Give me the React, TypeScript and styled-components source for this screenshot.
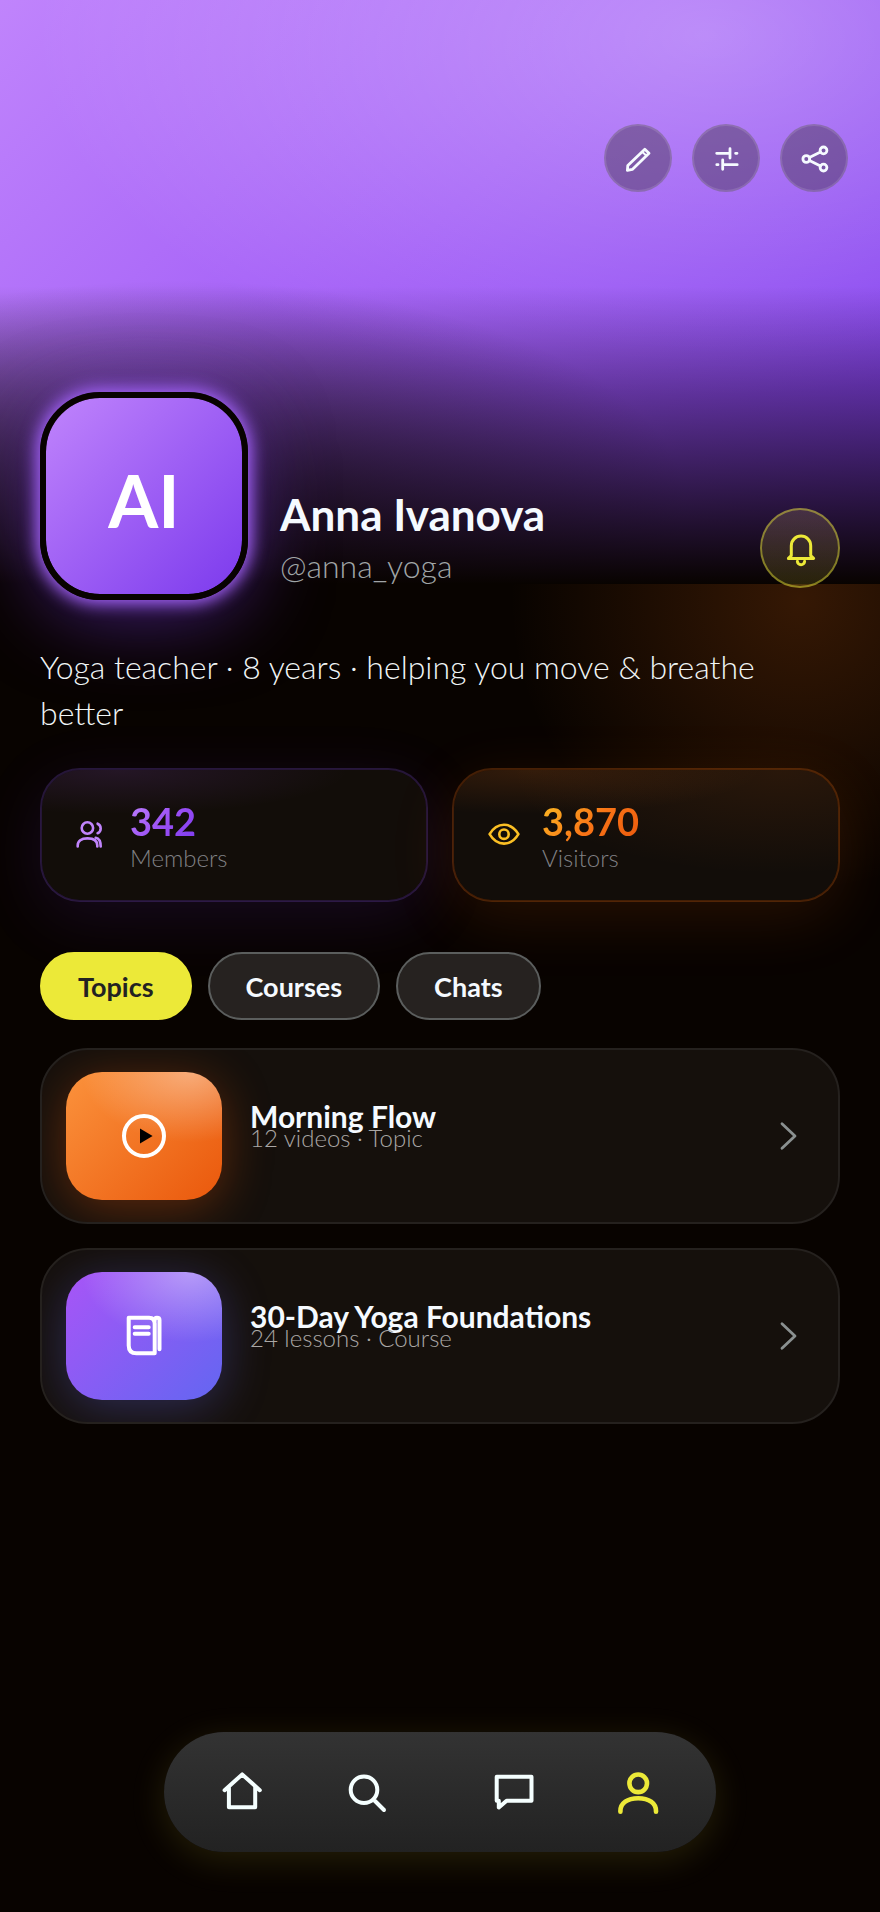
import React, { useState } from 'react';
import styled, { createGlobalStyle, css } from 'styled-components';

const GlobalStyle = createGlobalStyle`
  *, *::before, *::after { box-sizing: border-box; }
  body {
    margin: 0;
    background: #080300;
    font-family: Lato, "Liberation Sans", sans-serif;
    color: #f5faff;
  }
  button { font: inherit; color: inherit; border: 0; padding: 0; cursor: pointer; }
  h1, h2, p { margin: 0; }
`;

const Page = styled.div`
  min-height: 100vh;
  display: flex;
  flex-direction: column;
  padding-bottom: 60px;
  background: radial-gradient(circle 290px at calc(100% - 80px) 600px, rgba(249, 115, 22, 0.19), transparent) no-repeat;
`;

const Hero = styled.header`
  height: 584px;
  padding: 124px 32px 0;
  display: flex;
  justify-content: flex-end;
  align-items: flex-start;
  gap: 20px;
  background:
    linear-gradient(180deg, rgba(8, 3, 0, 0) 49%, #080300 100%),
    radial-gradient(ellipse 76% 62% at 80% 6%, rgba(255, 255, 255, 0.3), transparent),
    radial-gradient(ellipse 58% 38% at 20% 86%, rgba(8, 3, 0, 0.6), transparent),
    linear-gradient(135deg, #c084fc 0%, #a35ff7 45%, #7c3aed 100%);
`;

const RoundButton = styled.button`
  width: 68px;
  height: 68px;
  border-radius: 50%;
  border: 2px solid rgba(255, 255, 255, 0.12);
  background: rgba(58, 48, 60, 0.42);
  display: grid;
  place-items: center;
  color: #f5faff;
`;

const BellButton = styled(RoundButton)`
  width: 80px;
  height: 80px;
  margin-bottom: 12px;
  border-color: rgba(236, 233, 56, 0.45);
  background: linear-gradient(180deg, rgba(236, 200, 120, 0.17), rgba(200, 190, 56, 0.17)) border-box;
  color: #ece938;
`;

const Profile = styled.section`
  margin-top: -192px;
  padding: 0 40px;
  display: flex;
  align-items: flex-end;
`;

const Avatar = styled.div`
  flex: none;
  width: 208px;
  height: 208px;
  padding-top: 8px;
  border: 6px solid #080300;
  border-radius: 60px;
  display: grid;
  place-items: center;
  font-size: 72px;
  font-weight: 700;
  color: #fff;
  background: linear-gradient(135deg, #c084fc, #7c3aed) padding-box;
  box-shadow: 0 0 16px 4px #a362f7, 0 16px 80px rgba(124, 58, 237, 0.5);
`;

const Identity = styled.div`
  flex: 1;
  min-width: 0;
  padding: 0 32px 12px;
`;

const Name = styled.h1`
  font-size: 44px;
  line-height: 60px;
  font-weight: 700;
`;

const Handle = styled.p`
  font-size: 32px;
  line-height: 44px;
  font-weight: 300;
  color: #a0a5a7;
`;

const Content = styled.main`
  padding: 0 40px;
`;

const Bio = styled.p`
  margin-top: 44px;
  font-size: 32px;
  line-height: 46px;
  font-weight: 300;
  color: #f0f5f6;
`;

const Stats = styled.section`
  margin-top: 32px;
  display: grid;
  grid-template-columns: 1fr 1fr;
  gap: 24px;
`;

type Tone = 'violet' | 'orange';

const statTone = {
  violet: css`
    color: #c084fc;
    border-color: rgba(139, 92, 246, 0.22);
    background:
      radial-gradient(ellipse 60% 34% at 20% 0%, rgba(168, 85, 247, 0.12), transparent),
      #120d09;
    background-clip: padding-box;
    box-shadow: 0 16px 64px rgba(124, 58, 237, 0.13);
  `,
  orange: css`
    color: #fbbf24;
    border-color: rgba(249, 115, 22, 0.24);
    background:
      radial-gradient(ellipse 60% 34% at 20% 0%, rgba(249, 115, 22, 0.14), transparent),
      radial-gradient(ellipse 70% 80% at 85% 0%, rgba(249, 115, 22, 0.1), transparent),
      #120d09;
    background-clip: padding-box;
    box-shadow: 0 16px 64px rgba(249, 115, 22, 0.13);
  `,
};

const StatCard = styled.div<{ $tone: Tone }>`
  display: flex;
  align-items: center;
  gap: 18px;
  padding: 28px 30px;
  border: 2px solid;
  border-radius: 40px;
  ${p => statTone[p.$tone]}
`;

const StatValue = styled.p<{ $tone: Tone }>`
  width: fit-content;
  font-size: 38px;
  line-height: 46px;
  font-weight: 700;
  color: transparent;
  background: ${p => p.$tone === 'violet'
    ? 'linear-gradient(135deg, #c084fc, #9a4ff5 55%, #7c3aed)'
    : 'linear-gradient(135deg, #fbbf24, #f97316 55%, #ea580c)'};
  background-clip: text;
  -webkit-background-clip: text;
`;

const StatLabel = styled.p`
  font-size: 24px;
  line-height: 28px;
  font-weight: 300;
  color: #808084;
`;

const Tabs = styled.nav`
  margin-top: 50px;
  display: flex;
  flex-wrap: wrap;
  gap: 16px;
`;

const Tab = styled.button<{ $active: boolean }>`
  && {
    height: 68px;
    padding: 0 36px;
    border: 2px solid ${p => (p.$active ? '#ece938' : '#5b5e5d')};
    border-radius: 34px;
    background: ${p => (p.$active ? '#ece938' : '#262220')};
    color: ${p => (p.$active ? '#222' : '#f5faff')};
    font-size: 27px;
    font-weight: 700;
  }
`;

const List = styled.div`
  margin-top: 28px;
  display: grid;
  gap: 24px;
`;

const Item = styled.a`
  display: flex;
  align-items: center;
  padding: 22px;
  padding-left: 24px;
  border: 2px solid #25211e;
  border-radius: 48px;
  background: #15100c;
  color: inherit;
  text-decoration: none;
  overflow: hidden;
`;

const Thumb = styled.div<{ $tone: Tone }>`
  flex: none;
  width: 156px;
  height: 128px;
  border-radius: 36px;
  display: grid;
  place-items: center;
  color: #fff;
  background:
    radial-gradient(ellipse 70% 55% at 80% 0%, rgba(255, 255, 255, 0.38), transparent),
    ${p => p.$tone === 'orange'
      ? 'linear-gradient(135deg, #fb923c, #ea580c)'
      : 'linear-gradient(135deg, #a855f7, #6366f1)'};
  box-shadow: 0 8px 48px ${p => (p.$tone === 'orange' ? 'rgba(234, 88, 12, 0.35)' : 'rgba(99, 102, 241, 0.32)')};
`;

const ItemText = styled.div`
  flex: 1;
  min-width: 0;
  align-self: flex-start;
  padding: 30px 28px 0;
`;

const ItemTitle = styled.h2`
  font-size: 30px;
  line-height: 28px;
  font-weight: 700;
`;

const ItemMeta = styled.p`
  font-size: 24px;
  line-height: 16px;
  font-weight: 300;
  color: #aaa7a5;
`;

const BottomBar = styled.nav`
  width: min(552px, 100% - 80px);
  height: 120px;
  margin: auto auto 0;
  padding: 0 38px;
  border-radius: 60px;
  display: flex;
  justify-content: space-between;
  align-items: center;
  background: linear-gradient(180deg, #333, #222);
  box-shadow: 0 8px 36px rgba(236, 233, 56, 0.13);
`;

const BarGroup = styled.div`
  display: flex;
  gap: 44px;
`;

const BarButton = styled.button<{ $active?: boolean }>`
  && {
    width: 80px;
    height: 80px;
    background: none;
    display: grid;
    place-items: center;
    color: ${p => (p.$active ? '#ece938' : '#f5ffff')};
  }
`;

const Svg = styled.svg`
  display: block;
  flex: none;
  fill: none;
  stroke: currentColor;
  stroke-linecap: round;
  stroke-linejoin: round;
`;

const MutedSvg = styled(Svg)`
  color: #8a9090;
`;

type IconProps = { size: number; stroke: number; children: React.ReactNode };
const Icon = ({ size, stroke, children }: IconProps) => (
  <Svg width={size} height={size} viewBox={`0 0 ${size} ${size}`} strokeWidth={stroke} aria-hidden="true">
    {children}
  </Svg>
);

const PencilIcon = () => (
  <Icon size={40} stroke={2.8}>
    <path d="M9.4 32.4 9.8 27.4 26.8 11.2 31 15.2 14.3 31.4Z" />
    <path d="M24.4 14 28.4 17.8" strokeWidth={2} />
  </Icon>
);
const SlidersIcon = () => (
  <Icon size={40} stroke={2.8}>
    <path d="M10.7 15.3H24M24 10.7V20M29.6 15.3H31M10.8 26.7H12M16.7 22V31.3M16.7 26.7H31.2" />
  </Icon>
);
const ShareIcon = () => (
  <Icon size={40} stroke={2.8}>
    <circle cx="12.3" cy="21" r="3.4" />
    <circle cx="29.5" cy="12.4" r="3.4" />
    <circle cx="29.5" cy="29.6" r="3.4" />
    <path d="M15.4 19.4 26.5 13.9M15.4 22.6 26.5 28.1" />
  </Icon>
);
const BellIcon = () => (
  <Icon size={48} stroke={3}>
    <path d="M15.3 31.6V21.7A9.7 9.7 0 0 1 34.7 21.7V31.6L37.6 34.4H12.4Z" />
    <path d="M21.4 37.2A3.6 3.6 0 0 0 28.6 37.2" />
  </Icon>
);
const MembersIcon = () => (
  <Icon size={40} stroke={2.6}>
    <circle cx="15.4" cy="13" r="5.7" />
    <path d="M5.7 31.5V30.5C5.7 26 9 23.4 15.5 23.4S25.3 26 25.3 30.5V31.5" />
    <path d="M25.6 8.7A5.2 5.2 0 0 1 25.6 18.2M23.7 22.8C27 23.4 28.7 26.4 28.7 31.5" />
  </Icon>
);
const EyeIcon = () => (
  <Icon size={40} stroke={2.6}>
    <path d="M5.6 19.2C9 13.4 13.8 9.8 20 9.8S31 13.4 34.4 19.2C31 25 26.2 28.6 20 28.6S9 25 5.6 19.2Z" />
    <circle cx="20" cy="19.2" r="4.7" />
  </Icon>
);
const PlayIcon = () => (
  <Icon size={52} stroke={4}>
    <circle cx="26" cy="26" r="20" />
    <path d="M22 18.6 34.6 26 22 33.4Z" fill="#000" stroke="none" />
  </Icon>
);
const BookIcon = () => (
  <Icon size={52} stroke={4}>
    <path d="M10.7 7.7H31Q36.7 7.7 36.7 13.5V43.3H18.5Q10.7 43.3 10.7 35.5Z" />
    <path d="M36.5 11Q36.5 7.7 39 7.7 41.5 7.7 41.5 10V39.3M16.7 17.3H30.7M16.7 23.7H30.7" />
  </Icon>
);
const ChevronIcon = () => (
  <MutedSvg width={56} height={56} viewBox="0 0 56 56" strokeWidth={2.8} aria-hidden="true">
    <path d="M22 15.7 35 28 22 40.3" />
  </MutedSvg>
);
const HomeIcon = () => (
  <Icon size={56} stroke={4}>
    <path d="M10.6 26.2 28.2 10.4 45.8 26.2M14.9 23V43.2H41.2V23" />
  </Icon>
);
const SearchIcon = () => (
  <Icon size={56} stroke={4}>
    <circle cx="26" cy="25.7" r="13.3" />
    <path d="M37 37 46 46" />
  </Icon>
);
const ChatIcon = () => (
  <Icon size={56} stroke={4}>
    <path d="M10.7 12.7H45.5V36.7H20.6L12.8 43.5V36.7H10.7Z" />
  </Icon>
);
const UserIcon = () => (
  <Icon size={56} stroke={4.6}>
    <circle cx="28.2" cy="19.3" r="8.8" />
    <path d="M10.4 47.8V47C10.4 39 17.4 34.2 28.2 34.2S46 39 46 47V47.8" />
  </Icon>
);

const tabs = ['Topics', 'Courses', 'Chats'];

const items = [
  { title: 'Morning Flow', meta: '12 videos · Topic', tone: 'orange' as Tone, icon: <PlayIcon /> },
  { title: '30-Day Yoga Foundations', meta: '24 lessons · Course', tone: 'violet' as Tone, icon: <BookIcon /> },
];

export default function App() {
  const [active, setActive] = useState('Topics');
  return (
    <>
      <GlobalStyle />
      <Page>
        <Hero>
          <RoundButton aria-label="Edit profile"><PencilIcon /></RoundButton>
          <RoundButton aria-label="Settings"><SlidersIcon /></RoundButton>
          <RoundButton aria-label="Share"><ShareIcon /></RoundButton>
        </Hero>
        <Profile>
          <Avatar>AI</Avatar>
          <Identity>
            <Name>Anna Ivanova</Name>
            <Handle>@anna_yoga</Handle>
          </Identity>
          <BellButton aria-label="Notifications"><BellIcon /></BellButton>
        </Profile>
        <Content>
          <Bio>Yoga teacher · 8 years · helping you move &amp; breathe better</Bio>
          <Stats>
            <StatCard $tone="violet">
              <MembersIcon />
              <div>
                <StatValue $tone="violet">342</StatValue>
                <StatLabel>Members</StatLabel>
              </div>
            </StatCard>
            <StatCard $tone="orange">
              <EyeIcon />
              <div>
                <StatValue $tone="orange">3,870</StatValue>
                <StatLabel>Visitors</StatLabel>
              </div>
            </StatCard>
          </Stats>
          <Tabs aria-label="Profile sections">
            {tabs.map(t => (
              <Tab key={t} $active={t === active} onClick={() => setActive(t)}>{t}</Tab>
            ))}
          </Tabs>
          <List>
            {items.map(i => (
              <Item key={i.title} href="#">
                <Thumb $tone={i.tone}>{i.icon}</Thumb>
                <ItemText>
                  <ItemTitle>{i.title}</ItemTitle>
                  <ItemMeta>{i.meta}</ItemMeta>
                </ItemText>
                <ChevronIcon />
              </Item>
            ))}
          </List>
        </Content>
        <BottomBar aria-label="Main">
          <BarGroup>
            <BarButton aria-label="Home"><HomeIcon /></BarButton>
            <BarButton aria-label="Search"><SearchIcon /></BarButton>
          </BarGroup>
          <BarGroup>
            <BarButton aria-label="Chats"><ChatIcon /></BarButton>
            <BarButton aria-label="Profile" $active><UserIcon /></BarButton>
          </BarGroup>
        </BottomBar>
      </Page>
    </>
  );
}
